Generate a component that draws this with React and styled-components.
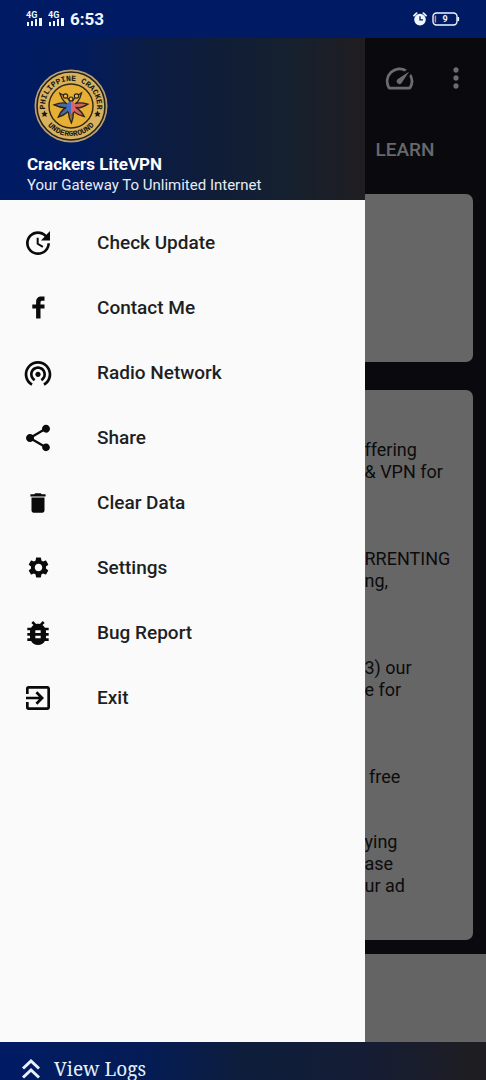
import React from 'react';
import styled, { createGlobalStyle } from 'styled-components';
import {
  MdUpdate,
  MdWifiTethering,
  MdShare,
  MdDelete,
  MdSettings,
  MdBugReport,
  MdExitToApp,
  MdSpeed,
  MdMoreVert,
} from 'react-icons/md';

const GlobalStyle = createGlobalStyle`
  * {
    box-sizing: border-box;
  }

  body {
    margin: 0;
    font-family: Roboto, "Liberation Sans", sans-serif;
    background: #0a0a0e;
  }

  button {
    border: 0;
    padding: 0;
    background: none;
    color: inherit;
    font: inherit;
    cursor: pointer;
  }
`;

const Screen = styled.div`
  display: flex;
  flex-direction: column;
  min-height: 100vh;
`;

const StatusBar = styled.header`
  display: flex;
  align-items: center;
  justify-content: space-between;
  height: 38px;
  padding: 0 26px;
  background: #001b64;
  color: #eef6ff;
`;

const StatusGroup = styled.div`
  display: flex;
  align-items: center;
  gap: 5px;
`;

const Clock = styled.span`
  font-size: 17px;
  font-weight: 700;
  line-height: 20px;
`;

const Main = styled.div`
  display: flex;
  flex: 1;
`;

const Drawer = styled.aside`
  display: flex;
  flex: 0 0 75%;
  flex-direction: column;
  background: #fafafa;
`;

const DrawerHeader = styled.div`
  padding: 31px 27px 4px;
  background: linear-gradient(90deg, #001b64 0%, #021b5c 22%, #0b1c45 40%, #0f1d38 58%, #15202f 78%, #201d21 100%);
  color: #fff;
`;

const LogoBox = styled.div`
  height: 74px;
  margin: 0 7px 10px;
`;

const AppName = styled.h1`
  margin: 0;
  font-size: 17px;
  font-weight: 700;
  line-height: 22px;
`;

const Tagline = styled.p`
  margin: 0;
  font-size: 15px;
  line-height: 21px;
  color: #e6ebf5;
`;

const Menu = styled.nav`
  display: flex;
  flex-direction: column;
  padding-top: 10px;
`;

const MenuItem = styled.button`
  display: flex;
  align-items: center;
  gap: 43px;
  height: 65px;
  padding: 0 22px;
  color: #1f1f1f;
  font-size: 19px;
  font-weight: 500;
  text-align: left;
`;

const MenuIcon = styled.span`
  display: flex;
  align-items: center;
  justify-content: center;
  width: 32px;
  height: 32px;
  color: #0a0a0a;
`;

const Backdrop = styled.main`
  display: flex;
  flex: 1;
  flex-direction: column;
  min-width: 0;
  overflow: hidden;
  color: #0c0c0c;
`;

const Toolbar = styled.div`
  display: flex;
  align-items: center;
  justify-content: space-between;
  height: 80px;
  padding: 0 14px 0 18px;
  color: #6c6c6e;
`;

const ToolButton = styled.button`
  display: flex;
`;

const Tab = styled.button`
  align-self: flex-start;
  height: 62px;
  margin-bottom: 14px;
  padding: 0 11px;
  color: #68686a;
  font-size: 19px;
  font-weight: 500;
`;

const Card = styled.section`
  flex: ${props => (props.$grow ? '1' : '0 0 168px')};
  margin: 0 13px ${props => (props.$grow ? '14px' : '28px')} 0;
  padding-top: 49px;
  border-radius: 0 7px 7px 0;
  background: #666;
`;

const Note = styled.p`
  margin: 0 0 ${props => props.$blank * 22 - 1}px;
  font-size: 18px;
  line-height: 22px;
  white-space: pre;
`;

const AdSpace = styled.div`
  height: 88px;
  background: #646464;
`;

const LogBar = styled.footer`
  height: 39px;
  padding: 15px 21px 0;
  background: linear-gradient(90deg, #001b64 0%, #041c55 30%, #0d1d3b 50%, #151d35 75%, #1f1d20 100%);
`;

const LogButton = styled.button`
  display: flex;
  align-items: center;
  gap: 13px;
  color: #e8f1fb;
  font-family: "Noto Serif", "Liberation Serif", serif;
  font-size: 19px;
  line-height: 24px;
`;

const Signal = () => (
  <svg width="17" height="16" viewBox="0 0 17 16" fill="currentColor" aria-hidden="true">
    <text x="0" y="7" fontFamily="Roboto, sans-serif" fontSize="9" fontWeight="700">4G</text>
    <rect x="1" y="11" width="2" height="4" />
    <rect x="5" y="10" width="2" height="5" />
    <rect x="9" y="8" width="2" height="7" />
    <rect x="13" y="7" width="3" height="8" />
  </svg>
);

const Alarm = () => (
  <svg width="14" height="14" viewBox="0 0 14 14" aria-hidden="true">
    <path d="M1 3.6 3.6 1.2M13 3.6 10.4 1.2" stroke="currentColor" strokeWidth="1.8" strokeLinecap="round" />
    <circle cx="7" cy="7.6" r="5.8" fill="currentColor" />
    <path d="M7 4.2v3.7h3" fill="none" stroke="#001b64" strokeWidth="1.3" />
  </svg>
);

const Battery = () => (
  <svg width="28" height="14" viewBox="0 0 28 14" aria-hidden="true">
    <rect x="1" y="1" width="24" height="12" rx="3.5" fill="none" stroke="currentColor" strokeWidth="1.4" />
    <path d="M26.3 5v4" stroke="currentColor" strokeWidth="1.6" />
    <path d="M3.4 3.5v7" stroke="#d98a80" strokeWidth="1.5" />
    <text x="13" y="10.2" fill="currentColor" fontFamily="Roboto, sans-serif" fontSize="9" fontWeight="700" textAnchor="middle">9</text>
  </svg>
);

const Facebook = () => (
  <svg width="32" height="32" viewBox="0 0 32 32" fill="currentColor" aria-hidden="true">
    <path d="M22.5 4.5v4.2h-2.2c-1.3 0-1.8.6-1.8 1.8v2h4v4h-4v10h-4.4v-10h-3.8v-4h3.8v-2.6c0-3.4 2-5.4 5.2-5.4z" />
  </svg>
);

const DoubleUp = () => (
  <svg width="20" height="21" viewBox="0 0 20 21" fill="none" stroke="currentColor" strokeWidth="3" aria-hidden="true">
    <path d="M2 9.5l8-7.5 8 7.5M2 18.5l8-7.5 8 7.5" />
  </svg>
);

const leaves = [0, 40, 85, 130, 180, 230, 275, 320];

const leafColor = angle => {
  if (angle === 0) return '#e9b93c';
  if (angle === 180) return '#8d6a4a';
  if (angle === 40 || angle === 320) return '#e0ac3a';
  return angle < 180 ? '#d0655a' : '#4a6a9c';
};

const Logo = () => (
  <svg width="74" height="74" viewBox="0 0 74 74" role="img" aria-label="Philippine Cracker Underground">
    <defs>
      <path id="arc-top" d="M12 45A26 26 0 1 1 62 45" />
      <path id="arc-bottom" d="M6.8 41A30.5 30.5 0 0 0 67.2 41" />
    </defs>
    <circle cx="37" cy="37" r="36.5" fill="#b9a272" />
    <circle cx="37" cy="37" r="34" fill="#d9b25e" stroke="#2a2118" strokeWidth="1.6" />
    <circle cx="37" cy="37" r="22" fill="#e7b034" stroke="#35260f" strokeWidth="1.4" />
    <g fill="#1d1710" fontFamily="Liberation Mono, monospace" fontWeight="700" textAnchor="middle">
      <text fontSize="8">
        <textPath href="#arc-top" startOffset="50%">PHILIPPINE CRACKER</textPath>
      </text>
      <text fontSize="8">
        <textPath href="#arc-bottom" startOffset="50%">UNDERGROUND</textPath>
      </text>
    </g>
    <path d="M10.5 41.5l1 2.2 2.3.2-1.7 1.6.5 2.4-2.1-1.2-2.1 1.2.5-2.4-1.7-1.6 2.3-.2zM63.5 41.5l1 2.2 2.3.2-1.7 1.6.5 2.4-2.1-1.2-2.1 1.2.5-2.4-1.7-1.6 2.3-.2z" fill="#1d1710" />
    <g stroke="#2b241f" strokeWidth="1.3">
      {leaves.filter(angle => angle !== 0).map(angle => (
        <path
          key={angle}
          d="M37 37c-3-4-3.4-9-0.4-17c3.6 7 3.8 13 .4 17z"
          fill={leafColor(angle)}
          transform={`rotate(${angle} 37 37)`}
        />
      ))}
    </g>
    <path d="M37 31l-4.5 4v6l4.5 4z" fill="#3f6fc0" />
    <path d="M37 31l4.5 4v6l-4.5 4z" fill="#e0656a" />
    <g fill="#efb93e" stroke="#2b241f" strokeWidth="1.2">
      <circle cx="31.5" cy="27" r="2.2" />
      <circle cx="42.5" cy="27" r="2.2" />
      <circle cx="37" cy="30" r="2" />
    </g>
  </svg>
);

const menuItems = [
  { label: 'Check Update', icon: <MdUpdate size={32} /> },
  { label: 'Contact Me', icon: <Facebook /> },
  { label: 'Radio Network', icon: <MdWifiTethering size={32} /> },
  { label: 'Share', icon: <MdShare size={32} /> },
  { label: 'Clear Data', icon: <MdDelete size={26} /> },
  { label: 'Settings', icon: <MdSettings size={25} /> },
  { label: 'Bug Report', icon: <MdBugReport size={32} /> },
  { label: 'Exit', icon: <MdExitToApp size={32} /> },
];

// blank is the number of empty lines after the note
const notes = [
  { text: 'ffering\n& VPN for', blank: 3 },
  { text: 'RRENTING\nng,', blank: 3 },
  { text: '3) our\ne for', blank: 3 },
  { text: ' free', blank: 2 },
  { text: 'ying\nase\nur ad', blank: 2 },
];

const App = () => (
  <Screen>
    <GlobalStyle />
    <StatusBar>
      <StatusGroup>
        <Signal />
        <Signal />
        <Clock>6:53</Clock>
      </StatusGroup>
      <StatusGroup>
        <Alarm />
        <Battery />
      </StatusGroup>
    </StatusBar>
    <Main>
      <Drawer>
        <DrawerHeader>
          <LogoBox>
            <Logo />
          </LogoBox>
          <AppName>Crackers LiteVPN</AppName>
          <Tagline>Your Gateway To Unlimited Internet</Tagline>
        </DrawerHeader>
        <Menu>
          {menuItems.map(item => (
            <MenuItem key={item.label} type="button">
              <MenuIcon>{item.icon}</MenuIcon>
              {item.label}
            </MenuItem>
          ))}
        </Menu>
      </Drawer>
      <Backdrop>
        <Toolbar>
          <ToolButton type="button" aria-label="Speed test">
            <MdSpeed size={33} />
          </ToolButton>
          <ToolButton type="button" aria-label="More options">
            <MdMoreVert size={32} />
          </ToolButton>
        </Toolbar>
        <Tab type="button">LEARN</Tab>
        <Card />
        <Card $grow>
          {notes.map(note => (
            <Note key={note.text} $blank={note.blank}>{note.text}</Note>
          ))}
        </Card>
        <AdSpace />
      </Backdrop>
    </Main>
    <LogBar>
      <LogButton type="button">
        <DoubleUp />
        View Logs
      </LogButton>
    </LogBar>
  </Screen>
);

export default App;
